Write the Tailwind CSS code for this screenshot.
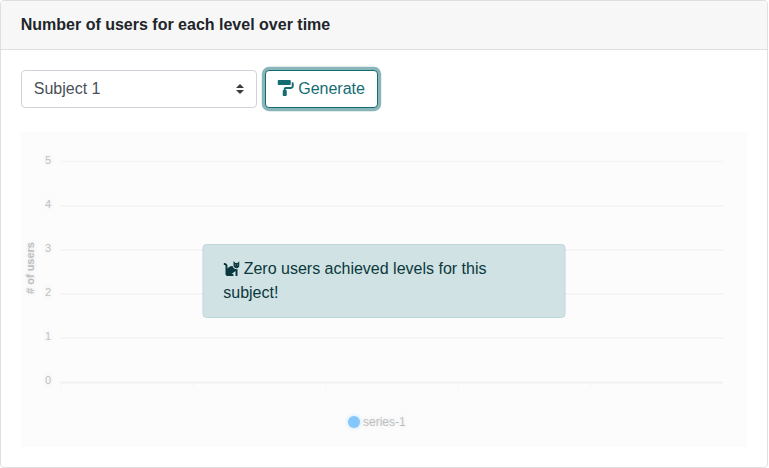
<!DOCTYPE html>
<html lang="en">
<head>
<meta charset="utf-8">
<title>Number of users for each level over time</title>
<script src="https://cdn.jsdelivr.net/npm/@tailwindcss/browser@4"></script>
</head>
<body class="bg-white font-['Liberation_Sans',Arial,sans-serif] text-base text-[#212529]">
<section class="flex h-[468px] w-[768px] flex-col overflow-hidden rounded-[4px] border border-[#dfdfdf] bg-white">
  <header class="h-[49px] shrink-0 border-b border-[#dfdfdf] bg-[#f7f7f7] px-[19.75px] py-3">
    <h2 class="text-base leading-6 font-bold">Number of users for each level over time</h2>
  </header>
  <div class="flex flex-col px-[19.75px] py-5">
    <div class="flex gap-2">
      <div class="flex h-[38px] w-[236px] items-center justify-between rounded-[4px] border border-[#ced4da] pr-3 pl-3 text-[#495057]">
        <span class="leading-6">Subject 1</span>
        <svg class="h-[10px] w-2" viewBox="0 0 4 5"><path fill="#343a40" d="M2 0L0 2h4zm0 5L0 3h4z"/></svg>
      </div>
      <button class="h-[38px] w-[113px] rounded-[4px] border border-[#146c73] bg-white text-left pl-3 leading-6 whitespace-nowrap text-[#146c73] shadow-[0_0_0_3.2px_rgba(20,108,115,0.5)]"><svg class="inline-block h-4 w-4 overflow-visible align-[-2px]" viewBox="8 0 512 512" fill="currentColor"><path d="M416 128V32c0-17.67-14.33-32-32-32H32C14.33 0 0 14.33 0 32v96c0 17.67 14.33 32 32 32h352c17.67 0 32-14.33 32-32zm32-64v128c0 17.67-14.33 32-32 32H256c-35.35 0-64 28.65-64 64v32c-17.67 0-32 14.33-32 32v128c0 17.67 14.33 32 32 32h64c17.67 0 32-14.33 32-32V352c0-17.67-14.33-32-32-32v-32h160c53.02 0 96-42.98 96-96v-64c0-35.35-28.65-64-64-64z"/></svg> Generate</button>
    </div>
    <div class="relative mt-6 h-[315px] w-[726px] bg-[#fcfcfc]">
      <svg class="block h-[315px] w-[726px]" viewBox="21 132 726 315">
        <defs><filter id="soft" x="-50%" y="-50%" width="200%" height="200%"><feGaussianBlur stdDeviation="2"/></filter></defs>
        <g fill="#f5f5f5">
          <rect x="60.5" y="160.5" width="662.5" height="2"/>
          <rect x="60.5" y="205" width="662.5" height="2"/>
          <rect x="60.5" y="249" width="662.5" height="2"/>
          <rect x="60.5" y="293" width="662.5" height="2"/>
          <rect x="60.5" y="337" width="662.5" height="2"/>
          <rect x="60.5" y="381.5" width="662.5" height="2" fill="#f1f1f1"/>
          <rect x="60.5" y="383" width="1" height="6"/><rect x="193" y="383" width="1" height="6"/><rect x="325" y="383" width="1" height="6"/><rect x="458" y="383" width="1" height="6"/><rect x="590" y="383" width="1" height="6"/>
        </g>
        <g class="text-[11px] [text-shadow:0_0_4px_#c4c8cc70]" fill="#c0c2c4" text-anchor="end">
          <text x="51" y="164">5</text><text x="51" y="208">4</text><text x="51" y="252">3</text><text x="51" y="296">2</text><text x="51" y="340">1</text><text x="51" y="384">0</text>
        </g>
        <text class="text-[11px] font-bold [text-shadow:0_0_4px_#c4c8cc70]" fill="#bcbfc2" text-anchor="middle" transform="translate(34 268) rotate(-90)"># of users</text>
        <circle cx="354" cy="422" r="6" fill="#80c6ff" opacity=".5" filter="url(#soft)"/>
        <circle cx="354" cy="422" r="6" fill="#84c7fd"/>
        <text class="text-[12px] [text-shadow:0_0_4px_#c4c8cc70]" fill="#bcbfc2" x="363" y="426">series-1</text>
      </svg>
      <div class="absolute top-[112px] left-1/2 h-[74px] w-[363px] -translate-x-1/2 rounded-[4px] border border-[#bdd6d8] bg-[#d0e2e3] px-5 py-3 leading-6 text-[#0a383c]"><svg class="inline-block h-4 w-4 align-[-2px]" viewBox="0 0 512 512" fill="currentColor"><path d="M290.59 192c-20.18 0-106.82 1.98-162.59 85.95V192c0-52.94-43.06-96-96-96-17.67 0-32 14.33-32 32s14.33 32 32 32c17.64 0 32 14.36 32 32v256c0 35.3 28.7 64 64 64h176c8.84 0 16-7.16 16-16v-16c0-17.67-14.33-32-32-32h-32l128-96v144c0 8.84 7.16 16 16 16h32c8.84 0 16-7.16 16-16V289.86c-10.29 2.67-20.89 4.54-32 4.54-61.81 0-113.52-44.05-125.41-102.4zM448 96h-64l-64-64v134.4c0 53.02 42.98 96 96 96s96-42.98 96-96V32l-64 64zm-72 80c-8.84 0-16-7.16-16-16s7.16-16 16-16 16 7.16 16 16-7.16 16-16 16zm80 0c-8.84 0-16-7.16-16-16s7.16-16 16-16 16 7.16 16 16-7.16 16-16 16z"/></svg> Zero users achieved levels for this<br>subject!</div>
    </div>
  </div>
</section>
</body>
</html>
